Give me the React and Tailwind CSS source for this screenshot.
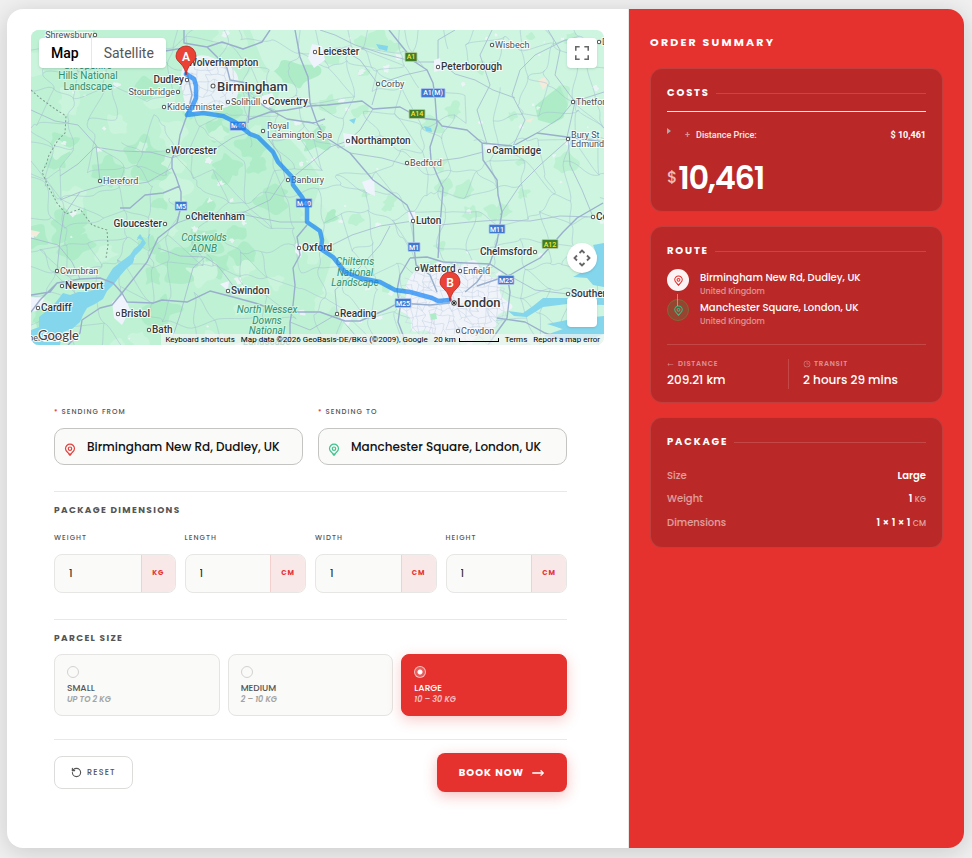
import React, { useState } from 'react';
import { RotateCcw } from 'lucide-react';
import { HiArrowLongLeft, HiArrowLongRight } from 'react-icons/hi2';
import { PiClock } from 'react-icons/pi';

// Small seeded generator so the map terrain is the same on every render
const createRandom = (seed) => {
  let value = seed;
  return () => {
    value = (value * 16807) % 2147483647;
    return value / 2147483647;
  };
};

// Rounds the corners of a closed outline by curving through the edge midpoints
const smoothShape = (points) => {
  const mid = (a, b) => `${((a[0] + b[0]) / 2).toFixed(1)} ${((a[1] + b[1]) / 2).toFixed(1)}`;
  let d = `M${mid(points[points.length - 1], points[0])}`;
  points.forEach((p, i) => {
    d += `Q${p[0].toFixed(1)} ${p[1].toFixed(1)} ${mid(p, points[(i + 1) % points.length])}`;
  });
  return `${d}Z`;
};

const buildMesh = (seed, x0, y0, x1, y1, step, keep, inside) => {
  const random = createRandom(seed);
  const cols = Math.ceil((x1 - x0) / step) + 1;
  const rows = Math.ceil((y1 - y0) / step) + 1;
  const points = [];
  for (let r = 0; r < rows; r++) {
    for (let c = 0; c < cols; c++) {
      points.push([
        x0 + c * step + (random() - 0.5) * step * 0.8,
        y0 + r * step + (random() - 0.5) * step * 0.8,
      ]);
    }
  }
  let d = '';
  const connect = (a, b) => {
    const mx = (a[0] + b[0]) / 2;
    const my = (a[1] + b[1]) / 2;
    const bendX = (random() - 0.5) * step * 0.6;
    const bendY = (random() - 0.5) * step * 0.6;
    if (random() > keep || (inside && !inside(mx, my))) return;
    const c1 = `${((a[0] + mx) / 2 + bendX).toFixed(1)} ${((a[1] + my) / 2 + bendY).toFixed(1)}`;
    const c2 = `${((b[0] + mx) / 2 - bendX).toFixed(1)} ${((b[1] + my) / 2 - bendY).toFixed(1)}`;
    d += `M${a[0].toFixed(1)} ${a[1].toFixed(1)}C${c1} ${c2} ${b[0].toFixed(1)} ${b[1].toFixed(1)}`;
  };
  for (let r = 0; r < rows; r++) {
    for (let c = 0; c < cols; c++) {
      const p = points[r * cols + c];
      if (c < cols - 1) connect(p, points[r * cols + c + 1]);
      if (r < rows - 1) connect(p, points[(r + 1) * cols + c]);
      if (c < cols - 1 && r < rows - 1 && random() > 0.75) connect(p, points[(r + 1) * cols + c + 1]);
    }
  }
  return d;
};

const buildPatches = (seed, count, minSize, maxSize, x0, x1, y0, y1) => {
  const random = createRandom(seed);
  let d = '';
  for (let i = 0; i < count; i++) {
    const cx = x0 + random() * (x1 - x0);
    const cy = y0 + random() * (y1 - y0);
    const size = minSize + random() * (maxSize - minSize);
    const points = [];
    for (let k = 0; k < 14; k++) {
      const angle = (k / 14) * Math.PI * 2;
      const radius = size * (0.45 + random() * 0.9);
      points.push([cx + Math.cos(angle) * radius, cy + Math.sin(angle) * radius * 0.85]);
    }
    d += smoothShape(points);
  }
  return d;
};

const inLondon = (x, y) => Math.hypot((x - 453) / 55, (y - 303) / 42) < 1;
const inBirmingham = (x, y) => Math.hypot((x - 209) / 28, (y - 84) / 27) < 1;

const minorRoads = buildMesh(71, 20, 20, 620, 360, 25, 0.7);
const londonStreets = buildMesh(13, 394, 256, 512, 350, 6, 0.8, inLondon);
const birminghamStreets = buildMesh(29, 178, 54, 242, 116, 7, 0.75, inBirmingham);
const forestWest = buildPatches(5, 34, 8, 24, 31, 330, 30, 345);
const forestEast = buildPatches(17, 34, 4, 12, 330, 604, 30, 345);
const meadowWest = buildPatches(91, 34, 6, 18, 31, 330, 30, 345);
const villages = buildPatches(43, 90, 1, 4, 31, 604, 30, 345);

const birminghamArea = smoothShape([
  [190, 58], [205, 54], [222, 62], [236, 70], [240, 85], [236, 102], [222, 110], [206, 108], [196, 116], [185, 105], [182, 90], [180, 70],
]);
const londonArea = smoothShape([
  [404, 286], [418, 266], [428, 276], [438, 258], [455, 270], [476, 256], [482, 276], [502, 278], [498, 296], [518, 308], [494, 314], [498, 330],
  [476, 330], [472, 350], [454, 334], [438, 350], [430, 328], [410, 334], [412, 316], [392, 308], [408, 298],
]);

const majorRoads = [
  'M184 30L184 43L207 47L220 60L227 68L230 80L247 83L250 103L248 123',
  'M207 47L222 42L243 49L262 42L270 30',
  'M184 48L165 51L150 48L128 49L112 47',
  'M187 72L192 95L187 115L180 135L178 148L172 158L172 168L176 177L181 192L181 206L177 223L158 238L147 262L122 293L112 305L100 308L82 320L80 333L68 345',
  'M31 295L50 292L57 283L80 279L100 278L113 283L122 293L127 302L153 303L162 300L187 302L210 291L233 297L255 303L275 310L298 312L320 312L345 321L360 321L385 310L398 303L430 305L450 303',
  'M120 208L130 208L145 195L163 193L180 186',
  'M307 225L297 237L300 255L293 268L295 285L293 305L290 322L290 345',
  'M295 30L300 57L308 77L310 103L317 123L325 137L350 153L373 180L390 192L407 205L413 218L414 247L416 265L430 275L437 292',
  'M389 30L405 50L415 62L427 70L433 83L435 97L437 125L430 147L431 160L437 175L443 188L440 225L438 258',
  'M248 120L270 112L287 110L310 106L327 105L362 101L373 109L400 107L420 118L437 120L442 126L467 130L482 143L513 146L537 133L567 137L604 142',
  'M482 143L483 160L497 180L498 195L502 212L497 242L490 263L477 282L465 292',
  'M410 258L427 257L443 262L490 264L507 275L510 292L507 318L497 332L488 345',
  'M410 258L400 275L397 290L400 308L398 322L403 335L405 345',
  'M477 286L510 275L527 265L540 258L550 247L563 232L577 218L603 203',
  'M253 97L265 107L287 119L313 123L325 119',
  'M57 283L40 300L31 312',
  'M497 318L525 322L545 333L570 342',
];

const secondaryRoads = [
  'M60 176L78 164L95 147L120 151L150 152L172 158L190 151L215 149L232 138L248 133',
  'M100 181L96 145L78 125L55 121L31 110',
  'M172 168L148 182L130 185L108 184L80 192L60 200',
  'M177 223L205 213L240 214L280 222L307 222',
  'M158 248L180 256L205 257L217 265L225 275L240 295',
  'M205 257L193 268L187 290L180 315L170 345',
  'M267 137L280 155L285 178L270 200L240 214',
  'M373 109L360 130L348 141L330 147L292 178',
  'M350 153L382 158L407 165L430 162L460 158L483 152',
  'M489 151L477 110L490 85L480 55L492 30',
  'M513 146L525 120L512 95L520 70L535 55L565 40L604 42',
  'M438 67L438 40L455 30',
  'M320 30L335 35L355 45L380 53L415 62L440 62L455 74L475 80L493 90L515 98',
  'M413 221L440 225L470 222L497 220L530 221L560 216L593 217',
  'M567 137L575 102L555 75L560 50L548 30',
  'M537 133L560 118L573 102L604 92',
  'M593 217L582 190L570 165L568 138',
  'M500 215L520 185L540 165L568 140',
  'M315 52L340 48L360 60L378 84L372 105',
  'M378 84L405 75L427 70',
  'M299 248L330 246L352 235L380 226L413 221',
  'M337 313L335 290L352 275L365 262L380 245L390 226',
  'M290 322L310 330L337 314L355 335L370 345',
  'M510 276L535 290L568 294L590 290',
  'M31 238L58 245L72 262L80 279',
  'M80 192L64 215L60 240L57 271',
];

const route =
  'M186 74L194 79L196 86L196 98L192 107L187 115L203 113L223 116L235 122L250 134L258 137L273 152L278 162L292 177L293 185L302 197L307 207L307 222L320 231L322 240L321 249L333 257L345 272L360 278L380 282L395 290L410 292L432 298L438 301L450 300';

const places = [
  { name: 'Shrewsbury', x: 95, y: 35, left: true },
  { name: 'Wolverhampton', x: 185, y: 63, bold: true },
  { name: 'Dudley', x: 187, y: 80, left: true, bold: true },
  { name: 'Stourbridge', x: 178, y: 92, left: true },
  { name: 'Kidderminster', x: 164, y: 107 },
  { name: 'Solihull', x: 228, y: 102 },
  { name: 'Coventry', x: 265, y: 102, bold: true },
  { name: 'Worcester', x: 168, y: 151, bold: true },
  { name: 'Leicester', x: 315, y: 52, bold: true },
  { name: 'Peterborough', x: 438, y: 67, bold: true },
  { name: 'Corby', x: 378, y: 84 },
  { name: 'Wisbech', x: 492, y: 45 },
  { name: 'Northampton', x: 348, y: 141, bold: true },
  { name: 'Cambridge', x: 489, y: 151, bold: true },
  { name: 'Bedford', x: 407, y: 163 },
  { name: 'Banbury', x: 288, y: 180 },
  { name: 'Hereford', x: 100, y: 181 },
  { name: 'Cheltenham', x: 188, y: 217, bold: true },
  { name: 'Gloucester', x: 165, y: 224, left: true, bold: true },
  { name: 'Oxford', x: 299, y: 248, bold: true },
  { name: 'Luton', x: 413, y: 221, bold: true },
  { name: 'Watford', x: 417, y: 269, bold: true },
  { name: 'Enfield', x: 460, y: 271 },
  { name: 'Chelmsford', x: 535, y: 252, left: true, bold: true },
  { name: 'Croydon', x: 458, y: 331 },
  { name: 'Reading', x: 337, y: 314, bold: true },
  { name: 'Swindon', x: 228, y: 291, bold: true },
  { name: 'Bath', x: 149, y: 330, bold: true },
  { name: 'Bristol', x: 118, y: 314, bold: true },
  { name: 'Cardiff', x: 38, y: 308, bold: true },
  { name: 'Newport', x: 62, y: 286, bold: true },
  { name: 'Cwmbran', x: 57, y: 271 },
  { name: 'Southend', x: 568, y: 294, bold: true },
  { name: 'Colchester', x: 593, y: 217, bold: true },
  { name: 'Thetford', x: 573, y: 102 },
  { name: 'Diss', x: 599, y: 42 },
];

const shields = [
  { name: 'M5', x: 181, y: 206 },
  { name: 'M40', x: 238, y: 126 },
  { name: 'M40', x: 304, y: 203 },
  { name: 'A1', x: 411, y: 57, green: true },
  { name: 'A1(M)', x: 433, y: 93 },
  { name: 'A14', x: 417, y: 114, green: true },
  { name: 'M11', x: 497, y: 229 },
  { name: 'M1', x: 414, y: 247 },
  { name: 'A12', x: 550, y: 244, green: true },
  { name: 'M25', x: 506, y: 280 },
  { name: 'M25', x: 403, y: 303 },
];

const parks = [
  { lines: ['Shropshire', 'Hills National', 'Landscape'], x: 88, y: 69 },
  { lines: ['Cotswolds', 'AONB'], x: 204, y: 241, italic: true },
  { lines: ['Chilterns', 'National', 'Landscape'], x: 355, y: 265, italic: true },
  { lines: ['North Wessex', 'Downs', 'National', 'Landscape'], x: 267, y: 313, italic: true },
];

const PinIcon = ({ className }) => (
  <svg viewBox="0 0 12 13" className={className} fill="none" stroke="currentColor" strokeLinecap="round" strokeLinejoin="round">
    <path d="M6 1.200A4.500 4.500 0 0 0 1.500 5.700C1.500 8 3.600 9.200 4.800 10.600L6 12L7.200 10.600C8.400 9.200 10.500 8 10.500 5.700A4.500 4.500 0 0 0 6 1.200Z" strokeWidth="1.200" />
    <path d="M5 11L6 12L7 11" strokeWidth="1.200" />
    <circle cx="6" cy="5.700" r="1.700" strokeWidth="1.200" />
  </svg>
);

const Marker = ({ x, y, letter }) => (
  <g transform={`translate(${x} ${y})`}>
    <path
      d="M0 0C-1 -6 -3 -9 -6 -12C-8.500 -14.500 -10 -16 -10 -19A10 10 0 0 1 10 -19C10 -16 8.500 -14.500 6 -12C3 -9 1 -6 0 0Z"
      fill="#ea4335"
      stroke="#b31412"
      strokeWidth="0.7"
    />
    <text y="-14" textAnchor="middle" fontSize="12" fontWeight="600" fill="#fff">
      {letter}
    </text>
  </g>
);

const MapDrawing = () => (
  <svg
    viewBox="31 30 573 315"
    preserveAspectRatio="xMidYMid slice"
    className="block w-full h-full font-['Roboto',sans-serif]"
    role="img"
    aria-label="Route from Dudley to London"
  >
    <rect x="31" y="30" width="573" height="315" fill="#cdf5e0" />
    <path d="M31 30H250L262 60L280 90L272 120L300 150L322 180L310 215L335 250L322 290L345 320L335 345H31Z" fill="#bff1d4" />
    <path d={forestWest} fill="#aeecc8" />
    <path d={meadowWest} fill="#cbf4dc" />
    <path d={forestEast} fill="#bbf0d0" />
    <path d="M560 86L568 105L563 118L552 124L538 120L535 106L548 95Z" fill="#aeecc8" />
    <path d="M538 80L545 77L548 84L543 90ZM525 120L534 118L530 123ZM31 230L40 232L36 237L31 235Z" fill="#f3ebdc" />

    <path d={villages} fill="#f2f5fb" opacity="0.8" />
    <path d={minorRoads} fill="none" stroke="#a3bdd0" strokeWidth="0.6" opacity="0.8" />
    <path d={secondaryRoads.join('')} fill="none" stroke="#a3b9d0" strokeWidth="0.8" strokeLinejoin="round" />

    {/* Water */}
    <path
      d="M39 317L48 310L56 302L63 293L70 295L78 292L87 292L97 289L104 283L108 276L113 268L122 261L130 255L134 249L140 244L142 240L137 238L140 234L146 243L141 250L135 256L133 263L126 269L120 276L114 284L107 291L103 299L95 304L87 308L83 315L80 322L72 329L63 332L60 345H31V330L39 327Z"
      fill="#84d6ec"
    />
    <path d="M141 235L137 240M150 234L148 238" stroke="#84d6ec" strokeWidth="1" />
    <path
      d="M604 243L593 245L597 256L589 268L573 277L587 278L593 285L604 287ZM604 298H567L543 298L533 306L523 313L508 311L514 316L527 317L543 307L567 304L604 305ZM604 316L567 320L547 324L563 329L543 336L563 340L593 338L604 334Z"
      fill="#84d6ec"
    />
    <path d="M376 44L388 46L387 51L379 49ZM424 126L431 128L432 132L426 131ZM349 120L356 118L354 124Z" fill="#84d6ec" />

    {/* Urban areas */}
    <path d={birminghamArea} fill="#eff3fb" fillOpacity="0.9" />
    <path d={londonArea} fill="#f1f3fb" fillOpacity="0.95" />
    <path
      d="M262 96L272 93L277 103L268 108L260 104ZM312 44L322 46L325 60L314 68L308 58ZM434 60L440 58L442 70L434 72ZM343 133L356 135L360 144L345 147ZM112 302L124 294L130 310L122 325L114 318ZM31 297L44 298L40 310L31 312ZM340 318L352 318L348 326ZM362 182L374 178L375 196L366 192ZM484 146L492 142L494 152L487 154ZM220 284L229 281L228 291ZM296 243L303 245L301 258L295 252ZM408 212L415 212L416 222L409 222Z"
      fill="#eff3fb"
    />
    <path d={londonStreets} fill="none" stroke="#c9d5e6" strokeWidth="0.6" />
    <path d={birminghamStreets} fill="none" stroke="#c3d0e3" strokeWidth="0.6" />
    <path d="M430 314L436 313L437 319L431 320Z" fill="#aeecc8" />

    <path d={majorRoads.join('')} fill="none" stroke="#9aafcd" strokeWidth="1.4" strokeLinejoin="round" />
    <path
      d="M31 90L40 98L55 109L66 116L65 133L58 140L49 155L46 165L42 172L48 186L57 203L66 214L80 209L92 225L107 230L108 245L106 258"
      fill="none"
      stroke="#7e9c90"
      strokeWidth="1"
      strokeDasharray="2 2"
    />

    {/* Town labels */}
    {places.map((place) => (
      <g key={place.name}>
        <circle cx={place.x} cy={place.y} r="1.7" fill="#fff" stroke="#555" strokeWidth="1" />
        <text
          x={place.left ? place.x - 3 : place.x + 3}
          y={place.y + 3}
          textAnchor={place.left ? 'end' : 'start'}
          fontSize={place.bold ? 10 : 9}
          fontWeight={place.bold ? 500 : 400}
          fill={place.bold ? '#333840' : '#4b5159'}
          stroke="#fff"
          strokeWidth="2"
          strokeOpacity="0.8"
          paintOrder="stroke"
        >
          {place.name}
        </text>
      </g>
    ))}
    <g fontSize="9" fill="#4b5159" stroke="#fff" strokeWidth="2" strokeOpacity="0.8" paintOrder="stroke">
      <text x="267" y="129">Royal</text>
      <text x="267" y="138">Leamington Spa</text>
      <text x="571" y="138">Bury St</text>
      <text x="571" y="147">Edmunds</text>
      <text x="64" y="341" textAnchor="end">Weston-super-Mare</text>
    </g>
    <g fill="#fff" stroke="#555">
      <circle cx="263" cy="131" r="1.700" />
      <circle cx="568" cy="139" r="1.700" />
      <circle cx="213" cy="86" r="2" />
    </g>
    <g fontSize="13" fontWeight="500" fill="#333840" stroke="#fff" strokeWidth="2" strokeOpacity="0.8" paintOrder="stroke">
      <text x="217" y="91">Birmingham</text>
      <text x="457" y="307">London</text>
    </g>

    {parks.map((park) => (
      <text
        key={park.lines[0]}
        y={park.y}
        textAnchor="middle"
        fontSize="10"
        fontStyle={park.italic ? 'italic' : 'normal'}
        fill="#2f8f6c"
        stroke="#d9f8e8"
        strokeWidth="2"
        strokeOpacity="0.7"
        paintOrder="stroke"
      >
        {park.lines.map((line, index) => (
          <tspan key={line} x={park.x} dy={index ? 10.5 : 0}>
            {line}
          </tspan>
        ))}
      </text>
    ))}

    {shields.map((shield) => {
      const width = shield.name.length * 4 + 4;
      return (
        <g key={`${shield.name}-${shield.x}`}>
          <rect
            x={shield.x - width / 2}
            y={shield.y - 4.5}
            width={width}
            height="9"
            rx="1"
            fill={shield.green ? '#3f7d2c' : '#4178cf'}
            stroke={shield.green ? '#b5cfa6' : '#b3c8ec'}
            strokeWidth="0.8"
          />
          <text
            x={shield.x}
            y={shield.y + 2.5}
            textAnchor="middle"
            fontSize="7"
            fontWeight="500"
            fill={shield.green ? '#f7e733' : '#fff'}
          >
            {shield.name}
          </text>
        </g>
      );
    })}

    {/* Route */}
    <path d={route} fill="none" stroke="#1a86f7" strokeOpacity="0.72" strokeWidth="4.500" strokeLinejoin="round" strokeLinecap="round" />
    <circle cx="454" cy="303" r="3" fill="#222" stroke="#fff" strokeWidth="0.6" />
    <circle cx="454" cy="303" r="1.600" fill="none" stroke="#fff" strokeWidth="0.6" />
    <Marker x={186} y={75} letter="A" />
    <Marker x={450} y={301} letter="B" />

    <text
      x="38"
      y="340"
      fontSize="13"
      fontWeight="500"
      fill="#444"
      stroke="#fff"
      strokeWidth="2"
      paintOrder="stroke"
      className="font-['Lato',sans-serif]"
    >
      Google
    </text>
  </svg>
);

const RouteMap = () => (
  <div className="relative h-[315px] overflow-hidden rounded-lg font-['Roboto',sans-serif]">
    <MapDrawing />

    <div className="absolute left-2 top-2 flex h-[30px] rounded-sm bg-white shadow text-sm">
      <button type="button" className="px-3 font-medium text-black border-r border-gray-200">
        Map
      </button>
      <button type="button" className="px-3 text-[#565656]">
        Satellite
      </button>
    </div>

    <button
      type="button"
      aria-label="Toggle fullscreen view"
      className="absolute right-[7px] top-2 flex size-[30px] items-center justify-center rounded-sm bg-white shadow"
    >
      <svg viewBox="0 0 18 18" className="size-[14px]" fill="#666">
        <path d="M0 0v6h2V2h4V0H0zm16 0h-4v2h4v4h2V0h-2zm0 16h-4v2h6v-6h-2v4zM2 12H0v6h6v-2H2v-4z" />
      </svg>
    </button>

    <button
      type="button"
      aria-label="Map camera controls"
      className="absolute right-[7px] bottom-[72px] flex size-[30px] items-center justify-center rounded-full bg-white shadow"
    >
      <svg viewBox="0 0 18 18" className="size-[18px]" fill="none" stroke="#666" strokeWidth="1.800">
        <path d="M6.500 4L9 1.500L11.500 4M6.500 14L9 16.500L11.500 14M4 6.500L1.500 9L4 11.500M14 6.500L16.500 9L14 11.500" />
      </svg>
    </button>
    <div className="absolute right-[7px] bottom-[18px] size-[30px] rounded-sm bg-white shadow" />

    {/* Attribution */}
    <div className="absolute bottom-0 right-0 flex h-[11px] items-center gap-[6px] bg-[#f5f5f5]/70 px-1 text-[8px] leading-[11px] text-black whitespace-nowrap">
      <button type="button">Keyboard shortcuts</button>
      <span>Map data ©2026 GeoBasis-DE/BKG (©2009), Google</span>
      <span className="flex items-center gap-[3px]">
        20 km
        <span className="h-1 w-10 border-x border-b border-black" />
      </span>
      <a href="#terms">Terms</a>
      <a href="#report">Report a map error</a>
    </div>
  </div>
);

const AddressField = ({ id, label, value, onChange, pinClass }) => (
  <div>
    <label htmlFor={id} className="block text-[7px] leading-3 font-medium tracking-[0.15em] text-[#555] uppercase">
      <span className="text-[#e53935]">*</span> {label}
    </label>
    <div className="mt-[10px] flex h-[37px] items-center rounded-[10px] border border-[#c4c4c2] bg-[#fafaf8] pl-[9px]">
      <PinIcon className={`mt-[6px] h-[13px] w-3 shrink-0 ${pinClass}`} />
      <input
        id={id}
        type="text"
        value={value}
        onChange={(e) => onChange(e.target.value)}
        className="w-full min-w-0 bg-transparent pl-[11px] text-xs font-medium text-[#111] outline-none"
      />
    </div>
  </div>
);

const DimensionField = ({ id, label, unit, value, onChange }) => (
  <div>
    <label htmlFor={id} className="block text-[7px] leading-3 font-medium tracking-[0.15em] text-[#555] uppercase">
      {label}
    </label>
    <div className="mt-[10px] flex h-[39px] overflow-hidden rounded-lg border border-[#e6e6e4] bg-[#fafaf8]">
      <input
        id={id}
        type="text"
        inputMode="numeric"
        value={value}
        onChange={(e) => onChange(e.target.value)}
        className="w-full min-w-0 flex-1 bg-transparent pl-[14px] text-[10px] font-medium text-[#333] outline-none"
      />
      <span className="flex items-center border-l border-[#f5cfcd] bg-[#f8e9e8] px-[10px] text-[7px] font-bold tracking-[0.15em] text-[#e53338]">
        {unit}
      </span>
    </div>
  </div>
);

const SizeOption = ({ name, range, checked, onSelect }) => (
  <label
    className={`block cursor-pointer rounded-lg border px-3 pt-[11px] pb-[9px] ${
      checked
        ? 'border-[#e5322f] bg-[#e5322f] text-white shadow-[0_4px_14px_rgba(229,50,47,0.25)]'
        : 'border-[#e4e4e2] bg-[#fafaf8] text-[#555]'
    }`}
  >
    <input
      type="radio"
      name="parcel-size"
      checked={checked}
      onChange={onSelect}
      className="block size-3 appearance-none rounded-full border border-[#d2d2d0] checked:border-white/60 checked:bg-[radial-gradient(circle,#fff_2px,#ea5c5a_3px)]"
    />
    <span className="mt-1 block text-[9px] leading-3 font-medium uppercase">{name}</span>
    <em className={`block text-[8px] leading-3 font-semibold uppercase ${checked ? 'text-white/70' : 'text-[#a3a3a0]'}`}>
      {range}
    </em>
  </label>
);

const SummaryCard = ({ title, children }) => (
  <section className="rounded-xl border border-white/10 bg-[#ba2927] pt-4 pr-4 pl-4">
    <div className="flex items-center gap-[6px]">
      <h3 className="text-[10px] leading-4 font-bold tracking-[0.18em] uppercase">{title}</h3>
      <span className="h-px flex-1 bg-white/15" />
    </div>
    {children}
  </section>
);

const RouteStop = ({ address, country, circleClass }) => (
  <li className="flex h-[30px] gap-[11px]">
    <span className={`flex size-[22px] shrink-0 items-center justify-center rounded-full ${circleClass}`}>
      <PinIcon className="size-[11px]" />
    </span>
    <div className="pt-px">
      <p className="text-[10px] leading-4 font-medium">{address}</p>
      <p className="text-[8px] leading-3 font-medium text-white/50">{country}</p>
    </div>
  </li>
);

const sizes = [
  { name: 'Small', range: 'Up to 2 kg' },
  { name: 'Medium', range: '2 – 10 kg' },
  { name: 'Large', range: '10 – 30 kg' },
];

const defaults = { weight: '1', length: '1', width: '1', height: '1' };

const App = () => {
  const [from, setFrom] = useState('Birmingham New Rd, Dudley, UK');
  const [to, setTo] = useState('Manchester Square, London, UK');
  const [dimensions, setDimensions] = useState(defaults);
  const [size, setSize] = useState('Large');

  const setDimension = (key) => (value) => setDimensions({ ...dimensions, [key]: value });

  const handleReset = () => {
    setFrom('');
    setTo('');
    setDimensions(defaults);
    setSize('Small');
  };

  return (
    <div className="flex min-h-screen bg-[#f0f0f0] pt-[9px] pr-2 pb-[10px] pl-[7px] font-['Poppins','Inter',sans-serif]">
      <div className="grid flex-1 grid-cols-[65fr_35fr] overflow-hidden rounded-2xl bg-white shadow-[0_4px_24px_rgba(0,0,0,0.16)]">
        <main className="min-w-0 border-r border-[#e8e8e6] px-6 pt-[21px]">
          <RouteMap />

          <form className="mt-[61px] pr-[37px] pl-[23px]" onSubmit={(e) => e.preventDefault()}>
            {/* Addresses */}
            <div className="grid grid-cols-2 gap-[15px]">
              <AddressField id="from" label="Sending from" value={from} onChange={setFrom} pinClass="text-[#e5403d]" />
              <AddressField id="to" label="Sending to" value={to} onChange={setTo} pinClass="text-[#3fc48d]" />
            </div>

            {/* Package dimensions */}
            <section className="mt-[26px] border-t border-[#e8e8e6] pt-[10px]">
              <h2 className="text-[9px] leading-4 font-bold tracking-[0.15em] text-[#555] uppercase">Package dimensions</h2>
              <div className="mt-[14px] grid grid-cols-4 gap-[9px]">
                <DimensionField id="weight" label="Weight" unit="KG" value={dimensions.weight} onChange={setDimension('weight')} />
                <DimensionField id="length" label="Length" unit="CM" value={dimensions.length} onChange={setDimension('length')} />
                <DimensionField id="width" label="Width" unit="CM" value={dimensions.width} onChange={setDimension('width')} />
                <DimensionField id="height" label="Height" unit="CM" value={dimensions.height} onChange={setDimension('height')} />
              </div>
            </section>

            {/* Parcel size */}
            <section className="mt-[26px] border-t border-[#e8e8e6] pt-[10px]">
              <h2 className="text-[9px] leading-4 font-bold tracking-[0.15em] text-[#555] uppercase">Parcel size</h2>
              <div className="mt-2 grid grid-cols-3 gap-2">
                {sizes.map((option) => (
                  <SizeOption
                    key={option.name}
                    name={option.name}
                    range={option.range}
                    checked={size === option.name}
                    onSelect={() => setSize(option.name)}
                  />
                ))}
              </div>
            </section>

            {/* Actions */}
            <div className="mt-[23px] flex items-center justify-between border-t border-[#e8e8e6] pt-[13px]">
              <button
                type="button"
                onClick={handleReset}
                className="flex h-[33px] items-center gap-[5px] rounded-lg border border-[#dcdcda] px-4 text-[8px] font-medium tracking-[0.15em] text-[#555]"
              >
                <RotateCcw className="size-[11px]" strokeWidth={2.5} />
                RESET
              </button>
              <button
                type="submit"
                className="flex h-[39px] items-center gap-[7px] rounded-lg bg-[#e5322f] px-[22px] text-[10px] font-bold tracking-widest text-white shadow-[0_4px_14px_rgba(229,50,47,0.3)]"
              >
                BOOK NOW
                <HiArrowLongRight className="size-[14px] stroke-1" />
              </button>
            </div>
          </form>
        </main>

        <aside className="min-w-0 bg-[#e5322f] px-[21px] pt-6 text-white">
          <h2 className="text-[11px] leading-[18px] font-bold tracking-[0.2em] uppercase">Order summary</h2>

          <div className="mt-[17px] flex flex-col gap-[14px]">
            <SummaryCard title="Costs">
              <details className="mt-[10px] border-t border-white/90 pt-[15px] font-['Roboto',sans-serif]">
                <summary className="flex h-4 list-none items-center text-[9px] leading-4 font-medium">
                  <svg viewBox="0 0 4 6" className="mb-2 h-[6px] w-1" fill="#aaa">
                    <path d="M0 0L4 3L0 6Z" />
                  </svg>
                  <span className="pr-[6px] pl-[14px] text-white/50">+</span>
                  <span className="flex-1 text-white/90">Distance Price:</span>
                  <span className="font-bold">$ 10,461</span>
                </summary>
              </details>
              <p className="mt-[17px] mb-[15px] flex items-center text-[32px] leading-9 font-semibold tracking-[-0.04em]">
                <span className="pr-[2px] text-base font-medium text-white/70">$</span>
                10,461
              </p>
            </SummaryCard>

            <SummaryCard title="Route">
              <div className="relative mt-[10px]">
                <ul>
                  <RouteStop address="Birmingham New Rd, Dudley, UK" country="United Kingdom" circleClass="bg-white/95 text-[#e5322f]" />
                  <RouteStop
                    address="Manchester Square, London, UK"
                    country="United Kingdom"
                    circleClass="border border-[#7c6a38] bg-[#964531] text-[#3fb57f]"
                  />
                </ul>
                <span className="absolute top-[25px] left-[10px] h-3 w-px bg-white/40" />
              </div>
              <dl className="mt-[15px] mb-[13px] border-t border-white/15 pt-[14px]">
                <div className="grid grid-cols-[122px_1fr]">
                  <div className="border-r border-white/15">
                    <dt className="flex items-center gap-1 text-[7px] leading-[10px] font-semibold tracking-widest text-white/50">
                      <HiArrowLongLeft className="size-[7px]" />
                      DISTANCE
                    </dt>
                    <dd className="mt-[2px] text-xs leading-[18px] font-medium">209.21 km</dd>
                  </div>
                  <div className="pl-[14px]">
                    <dt className="flex items-center gap-[3px] text-[7px] leading-[10px] font-semibold tracking-widest text-white/50">
                      <PiClock className="size-2" />
                      TRANSIT
                    </dt>
                    <dd className="mt-[2px] text-xs leading-[18px] font-medium">2 hours 29 mins</dd>
                  </div>
                </div>
              </dl>
            </SummaryCard>

            <SummaryCard title="Package">
              <dl className="mt-[14px] mb-3 text-[10px] leading-[23px]">
                <div className="flex justify-between">
                  <dt className="font-medium text-white/55">Size</dt>
                  <dd className="font-semibold">{size}</dd>
                </div>
                <div className="flex justify-between">
                  <dt className="font-medium text-white/55">Weight</dt>
                  <dd className="font-semibold">
                    {dimensions.weight} <span className="text-[8px] font-medium text-white/60">KG</span>
                  </dd>
                </div>
                <div className="flex justify-between">
                  <dt className="font-medium text-white/55">Dimensions</dt>
                  <dd className="font-semibold">
                    {dimensions.length} × {dimensions.width} × {dimensions.height}{' '}
                    <span className="text-[8px] font-medium text-white/60">CM</span>
                  </dd>
                </div>
              </dl>
            </SummaryCard>
          </div>
        </aside>
      </div>
    </div>
  );
};

export default App;
